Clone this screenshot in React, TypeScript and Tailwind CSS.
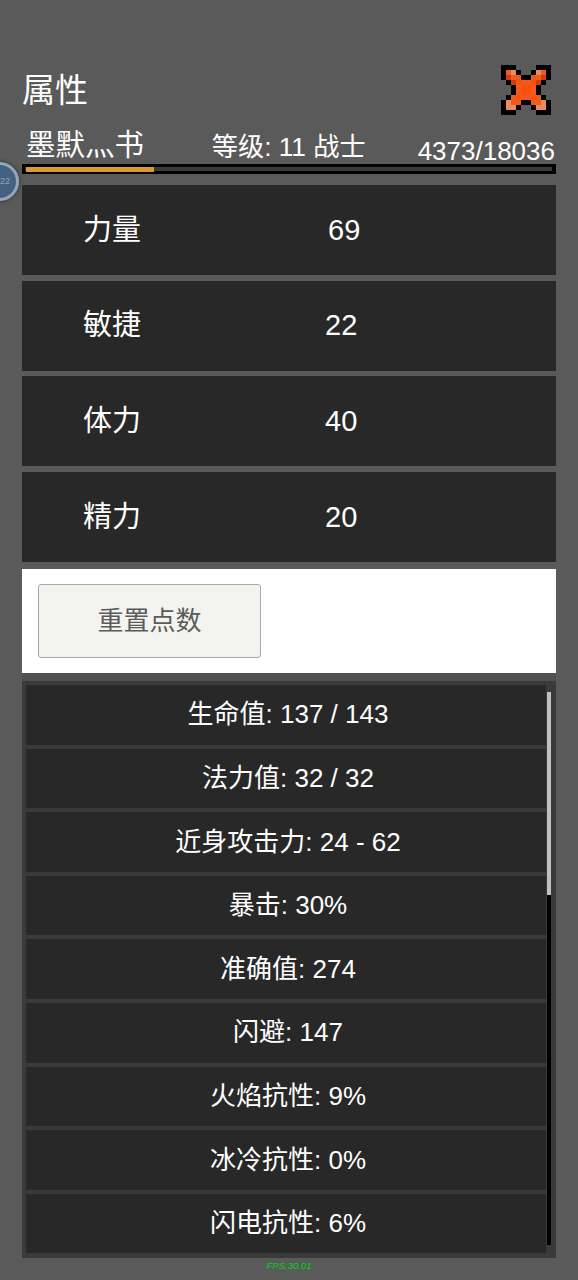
const font = "font-['Liberation_Sans','Noto_Sans_CJK_SC',sans-serif]"

const attributes = [
  { name: '力量', value: '69', offset: 'ml-[187px]' },
  { name: '敏捷', value: '22', offset: 'ml-[184px]' },
  { name: '体力', value: '40', offset: 'ml-[184px]' },
  { name: '精力', value: '20', offset: 'ml-[184px]' },
]

const stats = [
  '生命值: 137 / 143',
  '法力值: 32 / 32',
  '近身攻击力: 24 - 62',
  '暴击: 30%',
  '准确值: 274',
  '闪避: 147',
  '火焰抗性: 9%',
  '冰冷抗性: 0%',
  '闪电抗性: 6%',
]

// pixel art close button, one char per 5px block
const closePixels = [
  'KKK....KKK',
  'KOLK..KLOK',
  'KROOKKOORK',
  '.KRSOOSRK.',
  '..KOSSOK..',
  '..KOSSOK..',
  '.KOSOOSOK.',
  'KLOOKKOOLK',
  'KLLK..KLLK',
  'KKK....KKK',
]
const pixelColors: Record<string, string> = {
  K: '#000000',
  R: '#cf3c0e',
  O: '#ef5a1e',
  S: '#f9500a',
  L: '#ee8a60',
}

function CloseIcon() {
  return (
    <svg width="50" height="50" viewBox="0 0 10 10" shapeRendering="crispEdges" className="shrink-0">
      {closePixels.map((row, y) =>
        row.split('').map((c, x) =>
          c === '.' ? null : <rect key={`${x}-${y}`} x={x} y={y} width="1" height="1" fill={pixelColors[c]} />
        )
      )}
    </svg>
  )
}

export default function App() {
  return (
    <div className={`${font} relative w-[578px] h-[1280px] overflow-hidden bg-[#5a5a5a] text-white`}>
      {/* avatar peeking in from the left */}
      <div className="absolute left-[-20px] top-[162px] w-[39px] h-[39px] rounded-full border-[3px] border-[#93a8bd] bg-[#44617f] shadow-[0_0_3px_2px_#4a4a4a] flex items-center justify-center">
        <span className="ml-[11px] text-[9px] text-[#8ea2b5]">22</span>
      </div>

      <div className="ml-[22px] w-[534px] pt-[65px]">
        {/* Header */}
        <div className="flex items-center justify-between h-[50px] pr-[5px]">
          <h1 className="text-[33px] font-normal leading-none">属性</h1>
          <CloseIcon />
        </div>

        <div className="flex items-end h-[49px] text-[26px] leading-none">
          <span className="ml-[4px] w-[186px] text-[29.5px] whitespace-nowrap pb-[5px]">墨默灬书</span>
          <span className="w-[206px] text-[26.2px] whitespace-nowrap pb-[4px]">等级: 11 战士</span>
          <span className="flex-1 text-right whitespace-nowrap pr-[1px]">4373/18036</span>
        </div>

        {/* xp bar */}
        <div className="h-[10px] border-[3px] border-r-4 border-black bg-[#3a3a3a]">
          <div className="ml-[1px] h-[5px] w-[128px] bg-[#dc9a2c]" />
        </div>

        {/* Attributes */}
        <div className="mt-[11px] flex flex-col gap-[5.7px]">
          {attributes.map(a => (
            <div key={a.name} className="h-[90px] bg-[#282828] flex items-center pl-[61px] pt-[1px] text-[29px]">
              <span className="w-[58px]">{a.name}</span>
              <span className={a.offset}>{a.value}</span>
            </div>
          ))}
        </div>

        {/* Reset */}
        <div className="mt-[7px] h-[104px] bg-white flex items-center pl-[16px]">
          <button className="w-[223px] h-[74px] rounded-[3px] border border-[#a9a9a9] bg-[#f3f3ef] text-[26px] text-[#5b5b5b]">
            重置点数
          </button>
        </div>

        {/* Stats list */}
        <div className="pt-[8px] bg-[#505050]">
          <div className="h-[577px] bg-[#3a3a3a] pl-[4px] pr-[10px] pt-[4px] relative">
            <div className="flex flex-col gap-[4px] h-[569px] overflow-hidden">
              {stats.map(s => (
                <div key={s} className="h-[59.6px] shrink-0 bg-[#282828] flex items-center justify-center pl-[4px] text-[26px]">
                  {s}
                </div>
              ))}
            </div>
            {/* scrollbar */}
            <div className="absolute right-[5px] top-[11px] w-[4px] h-[553px] bg-black">
              <div className="h-[203px] bg-[#c0c0c0]" />
            </div>
          </div>
        </div>
      </div>

      <div className="text-center mt-[3px] text-[9.5px] italic text-[#22c52a] leading-none [text-shadow:0_0_1px_#1a8a20]">FPS:30.01</div>
    </div>
  )
}
